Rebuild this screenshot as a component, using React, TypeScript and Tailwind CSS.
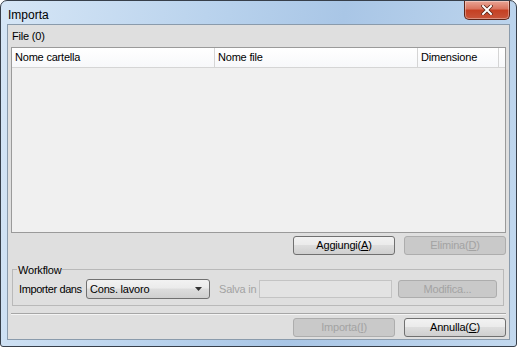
import React from 'react';

const font = "font-['Liberation_Sans',Arial,sans-serif]";

function Btn({ label, k, disabled, w }: { label: string; k: string; disabled?: boolean; w: string }) {
  const [pre, post] = label.split('|');
  return (
    <div
      className={`${w} h-[19px] shrink-0 whitespace-nowrap rounded-[3px] border flex items-center justify-center text-[11px] tracking-[-0.2px] ${
        disabled
          ? 'border-[#adadad] bg-[#c9c9c9] text-[#a3a3a3]'
          : 'border-[#707070] bg-[linear-gradient(#f2f2f2,#ebebeb_45%,#dddddd_50%,#cfcfcf)] text-black'
      }`}
    >
      {pre}(<span className="underline">{k}</span>){post}
    </div>
  );
}

function CloseButton() {
  return (
    <div className="w-[46px] h-[19px] rounded-b-[5px] border border-t-0 border-[#5e2518] bg-[linear-gradient(#e9a595,#d9725c_45%,#c53f22_50%,#c8553a)] flex items-center justify-center shadow-[inset_0_0_0_1px_rgba(255,255,255,0.35)]">
      <svg width="12" height="10" viewBox="0 0 12 10">
        <path d="M2 1 L10 9 M10 1 L2 9" stroke="#5b2416" strokeWidth="3.6" strokeLinecap="square" />
        <path d="M2 1 L10 9 M10 1 L2 9" stroke="#ffffff" strokeWidth="2" strokeLinecap="square" />
      </svg>
    </div>
  );
}

export default function App() {
  return (
    <div className={`w-[517px] h-[347px] ${font} text-[11px] text-black`}>
      <div className="w-full h-full rounded-t-[7px] rounded-b-[3px] border border-[#373f4a] bg-[linear-gradient(100deg,#d6e6f6,#b7d1ec_40%,#a9c6e6_60%,#c3d9ef)] flex flex-col px-[6px] pb-[6px]">
        {/* barra titolo */}
        <div className="h-[23px] flex justify-between items-start">
          <span className="text-[12px] text-black pt-[5px] pl-[1px]">Importa</span>
          <CloseButton />
        </div>

        {/* area client */}
        <div className="flex-1 border border-[#8a9bac] bg-[#dfdfdf] flex flex-col px-[3px]">
          <div className="h-[22px] flex items-center pl-[1px] tracking-[-0.2px]">File (0)</div>

          {/* tabella */}
          <div className="h-[186px] border border-[#9a9a9a] bg-[#f0f0f0] flex flex-col">
            <div className="h-[20px] flex bg-[linear-gradient(#ffffff,#f7f8fa)] border-b border-[#d5d5d5] tracking-[-0.2px]">
              <div className="w-[203px] border-r border-[#d5d5d5] flex items-center pl-[3px]">Nome cartella</div>
              <div className="w-[203px] border-r border-[#d5d5d5] flex items-center pl-[3px]">Nome file</div>
              <div className="w-[81px] border-r border-[#d5d5d5] flex items-center pl-[3px]">Dimensione</div>
              <div className="flex-1" />
            </div>
          </div>

          <div className="flex justify-end gap-[9px] mt-[3px]">
            <Btn label="Aggiungi|" k="A" w="w-[102px]" />
            <Btn label="Elimina|" k="D" w="w-[102px]" disabled />
          </div>

          {/* workflow */}
          <div className="mt-[14px] ml-[1px] mr-[2px] h-[37px] border border-[#b9b9b9] relative flex items-center pl-[6px] pt-[3px] whitespace-nowrap">
            <span className="absolute -top-[8px] left-[4px] bg-[#dfdfdf] px-[1px] tracking-[-0.2px]">Workflow</span>
            <span className="shrink-0 w-[67px] tracking-[-0.4px]">Importer dans</span>
            <div className="shrink-0 w-[124px] h-[20px] rounded-[3px] border border-[#707070] bg-[linear-gradient(#f2f2f2,#ebebeb_45%,#dddddd_50%,#cfcfcf)] flex items-center justify-between pl-[3px] pr-[7px] tracking-[-0.2px]">
              <span>Cons. lavoro</span>
              <svg width="7" height="4" viewBox="0 0 7 4">
                <path d="M0 0 H7 L3.5 4 Z" fill="#333" />
              </svg>
            </div>
            <span className="shrink-0 ml-[9px] w-[40px] text-[#a3a3a3] tracking-[-0.2px]">Salva in</span>
            <div className="shrink-0 w-[133px] h-[18px] border border-[#c4c4c4] bg-[#e3e3e3]" />
            <div className="shrink-0 ml-[6px] w-[99px] h-[18px] rounded-[3px] border border-[#adadad] bg-[#c9c9c9] text-[#a3a3a3] flex items-center justify-center tracking-[-0.2px]">
              Modifica...
            </div>
          </div>

          <div className="mt-[7px] border-t border-[#a6a6a6] border-b border-b-[#f4f4f4]" />

          <div className="flex justify-end gap-[9px] mt-[3px]">
            <Btn label="Importa|" k="I" w="w-[102px]" disabled />
            <Btn label="Annulla|" k="C" w="w-[102px]" />
          </div>
        </div>
      </div>
    </div>
  );
}
